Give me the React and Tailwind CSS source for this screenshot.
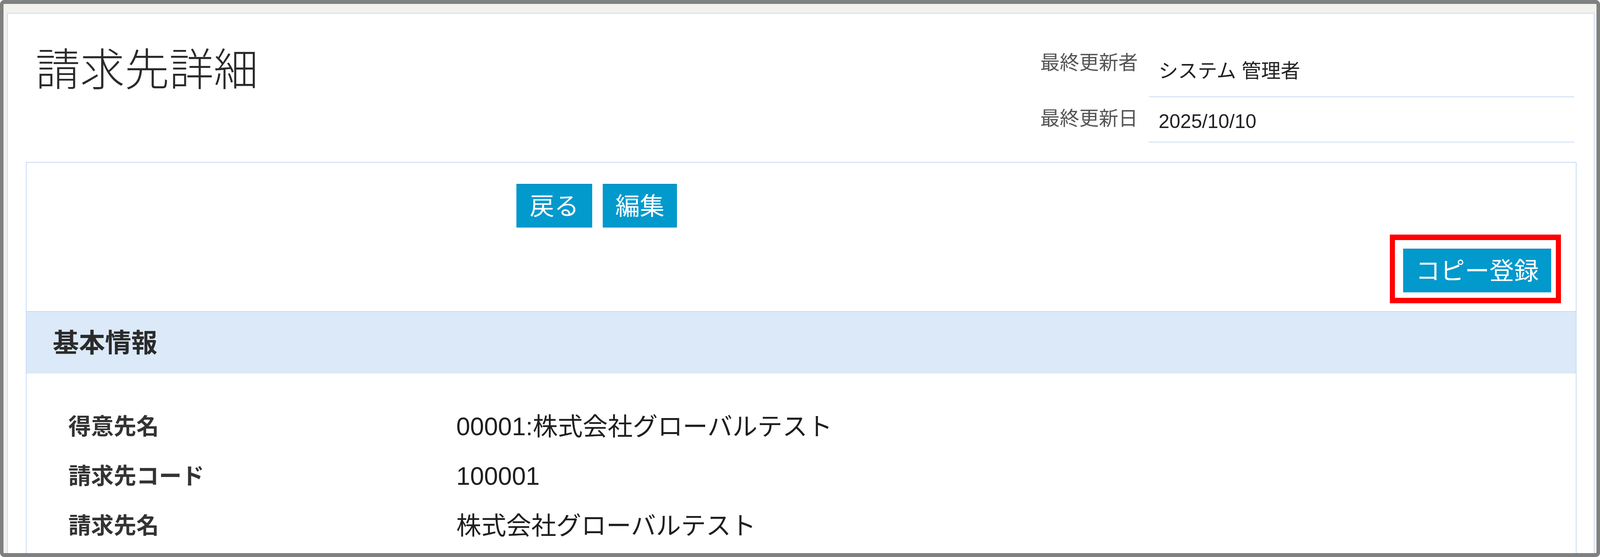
const font = "font-['Liberation_Sans','Noto_Sans_CJK_JP',sans-serif]";

function MetaRow({ label, value, labelPad, valuePad }) {
  return (
    <>
      <dt className={`whitespace-nowrap pr-[28px] text-right text-[50px] leading-none text-[#555] ${labelPad}`}>{label}</dt>
      <dd className={`whitespace-nowrap pl-[25px] text-[50px] leading-none text-[#222] border-b-2 border-[#c9def4] ${valuePad}`}>{value}</dd>
    </>
  );
}

function BlueButton({ children, width }) {
  return (
    <button
      type="button"
      className={`${width} h-[112px] shrink-0 whitespace-nowrap bg-[#0299cc] border-t-2 border-[#0a8dbd] text-white text-[63px] leading-none flex items-center justify-center`}
    >
      {children}
    </button>
  );
}

const rows = [
  { label: "得意先名", value: "00001:株式会社グローバルテスト" },
  { label: "請求先コード", value: "100001" },
  { label: "請求先名", value: "株式会社グローバルテスト" },
];

export default function App() {
  return (
    <div className={`w-full h-screen bg-white ${font}`}>
      <div className="flex h-full flex-col overflow-hidden rounded-[11px] border-x-[9px] border-y-[10px] border-[#808080] bg-[#f2f1ed] pt-[23px] pl-[9px] pr-[5px]">
        <div className="flex flex-1 flex-col border-x-2 border-t-2 border-[#c6dcf3] bg-white">
          <header className="flex h-[380px] shrink-0 justify-between">
            <h1 className="pl-[71px] pt-[88px] text-[114px] leading-none font-light text-[#2a2a2a]">請求先詳細</h1>
            <dl className="mr-[50px] mt-[96px] grid grid-cols-[281px_1089px] content-start">
              <MetaRow label="最終更新者" value="システム 管理者" labelPad="pt-[5px]" valuePad="pt-[26px] pb-[40px]" />
              <MetaRow label="最終更新日" value="2025/10/10" labelPad="pt-[30px]" valuePad="pt-[37px] pb-[27px]" />
            </dl>
          </header>

          <div className="ml-[46px] mr-[44px] flex-1 border-x-2 border-t-2 border-[#c6dcf3]">
            <div className="h-[380px] pt-[54px]">
              <div className="flex gap-[27px] pl-[1254px]">
                <BlueButton width="w-[194px]">戻る</BlueButton>
                <BlueButton width="w-[190px]">編集</BlueButton>
              </div>
              <div className="mt-[54px] flex justify-end pr-[63px]">
                <div className="relative">
                  <BlueButton width="w-[379px]">コピー登録</BlueButton>
                  <span className="pointer-events-none absolute -left-[34px] -right-[25px] -top-[36px] -bottom-[28px] border-x-[13px] border-y-[14px] border-[#ff0000]" />
                </div>
              </div>
            </div>

            <div className="flex h-[160px] items-center border-t-2 border-[#c6dcf3] bg-[#dbe9f8] pl-[67px] text-[67px] leading-none font-bold text-[#2b2b2b]">
              基本情報
            </div>

            <div className="pt-[72px] pl-[107px]">
              {rows.map((row) => (
                <div key={row.label} className="flex h-[127px] items-center">
                  <div className="w-[993px] text-[58px] leading-none font-bold text-[#333]">{row.label}</div>
                  <div className="text-[64px] leading-none text-[#1f1f1f]">{row.value}</div>
                </div>
              ))}
            </div>
          </div>
        </div>
      </div>
    </div>
  );
}
